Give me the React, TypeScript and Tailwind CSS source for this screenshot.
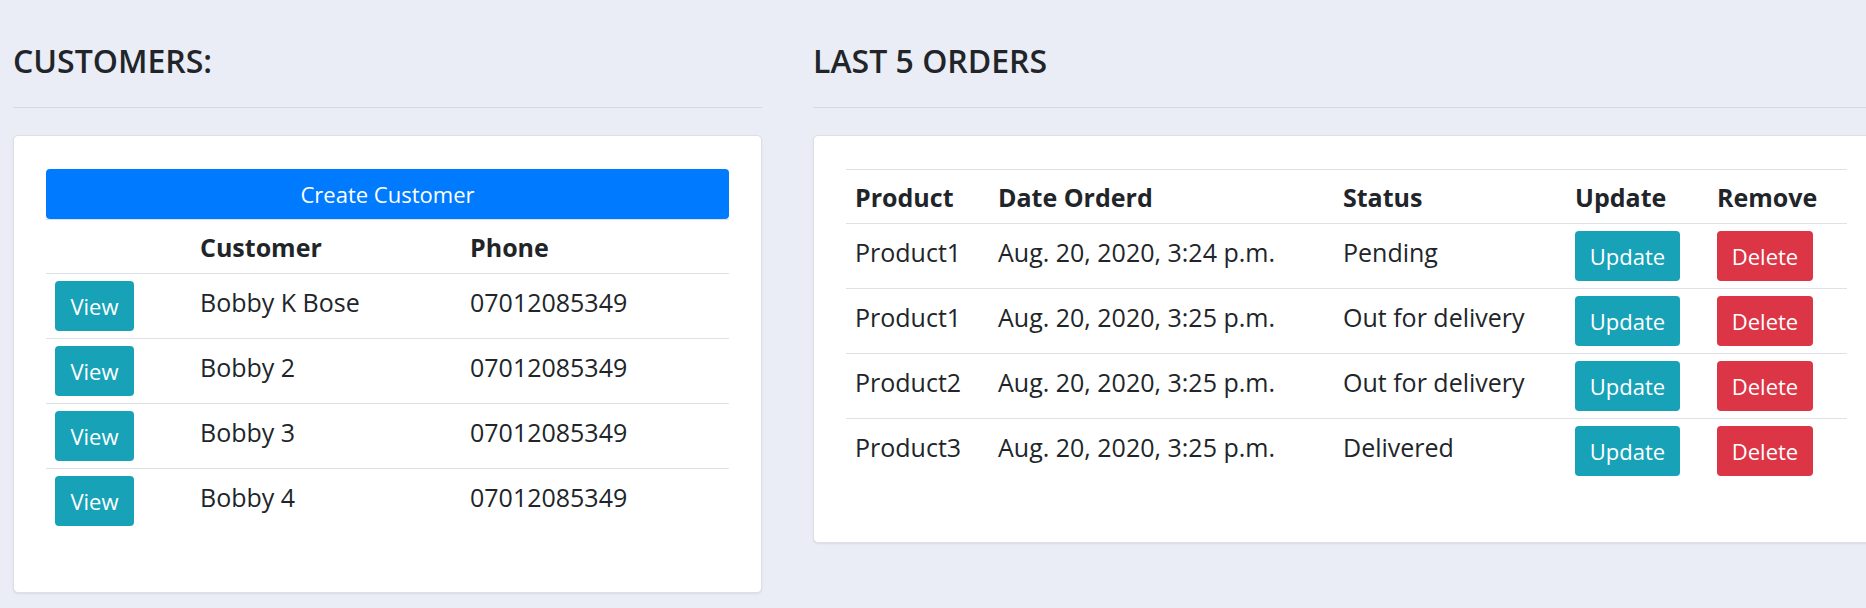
import React from "react";

const customers = [
  { name: "Bobby K Bose", phone: "07012085349" },
  { name: "Bobby 2", phone: "07012085349" },
  { name: "Bobby 3", phone: "07012085349" },
  { name: "Bobby 4", phone: "07012085349" },
];

const orders = [
  { product: "Product1", date: "Aug. 20, 2020, 3:24 p.m.", status: "Pending" },
  { product: "Product1", date: "Aug. 20, 2020, 3:25 p.m.", status: "Out for delivery" },
  { product: "Product2", date: "Aug. 20, 2020, 3:25 p.m.", status: "Out for delivery" },
  { product: "Product3", date: "Aug. 20, 2020, 3:25 p.m.", status: "Delivered" },
];

const th = "border-t border-b border-[#dee2e6] px-[9px] pt-[9px] pb-[8px] text-left align-top font-bold leading-[36px]";
const tdText = "border-t border-[#dee2e6] px-[9px] pt-[10px] align-top leading-[36px]";
const tdBtn = "border-t border-[#dee2e6] px-[9px] py-[7px] align-top";
const btn = "flex h-[50px] items-center justify-center rounded-[4px] text-[22px] text-white";

export default function App() {
  return (
    <div className="min-h-screen w-full overflow-hidden bg-[#eaedf5] font-['Open_Sans',sans-serif] text-[25px] text-[#212529]">
      <div className="flex w-[1920px] gap-[51px] pl-[13px]">
        {/* Customers column */}
        <section className="w-[749px] shrink-0">
          <h4 className="pt-[42px] text-[32px] leading-[38px] font-semibold">CUSTOMERS:</h4>
          <hr className="mt-[27px] border-t border-[#d5d8df]" />
          <div className="mt-[27px] rounded-[5px] border border-[#dcdfe5] bg-white px-8 pt-[33px] pb-[33px] shadow-[0_1px_2px_rgba(0,0,0,0.08)]">
            <button className="block h-[50px] w-full rounded-[4px] bg-[#007bff] text-[22px] text-white">
              Create Customer
            </button>
            <table className="mb-[26px] w-full table-fixed border-collapse">
              <colgroup>
                <col className="w-[145px]" />
                <col className="w-[270px]" />
                <col />
              </colgroup>
              <thead>
                <tr>
                  <th className={th}></th>
                  <th className={th}>Customer</th>
                  <th className={th}>Phone</th>
                </tr>
              </thead>
              <tbody>
                {customers.map((c) => (
                  <tr key={c.name}>
                    <td className={tdBtn}>
                      <button className={`${btn} w-[79px] bg-[#17a2b8]`}>View</button>
                    </td>
                    <td className={tdText}>{c.name}</td>
                    <td className={tdText}>{c.phone}</td>
                  </tr>
                ))}
              </tbody>
            </table>
          </div>
        </section>

        {/* Orders column */}
        <section className="w-[1070px] shrink-0">
          <h4 className="pt-[42px] text-[32px] leading-[38px] font-semibold">LAST 5 ORDERS</h4>
          <hr className="mt-[27px] border-t border-[#d5d8df]" />
          <div className="mt-[27px] rounded-[5px] border border-[#dcdfe5] bg-white px-8 pt-[33px] pb-[33px] shadow-[0_1px_2px_rgba(0,0,0,0.08)]">
            <table className="mb-[26px] w-[1001px] table-fixed border-collapse">
              <colgroup>
                <col className="w-[143px]" />
                <col className="w-[345px]" />
                <col className="w-[232px]" />
                <col className="w-[142px]" />
                <col className="w-[139px]" />
              </colgroup>
              <thead>
                <tr>
                  <th className={th}>Product</th>
                  <th className={th}>Date Orderd</th>
                  <th className={th}>Status</th>
                  <th className={th}>Update</th>
                  <th className={th}>Remove</th>
                </tr>
              </thead>
              <tbody>
                {orders.map((o, i) => (
                  <tr key={i}>
                    <td className={tdText}>{o.product}</td>
                    <td className={tdText}>{o.date}</td>
                    <td className={tdText}>{o.status}</td>
                    <td className={tdBtn}>
                      <button className={`${btn} w-[105px] bg-[#17a2b8]`}>Update</button>
                    </td>
                    <td className={tdBtn}>
                      <button className={`${btn} w-[96px] bg-[#dc3545]`}>Delete</button>
                    </td>
                  </tr>
                ))}
              </tbody>
            </table>
          </div>
        </section>
      </div>
    </div>
  );
}
